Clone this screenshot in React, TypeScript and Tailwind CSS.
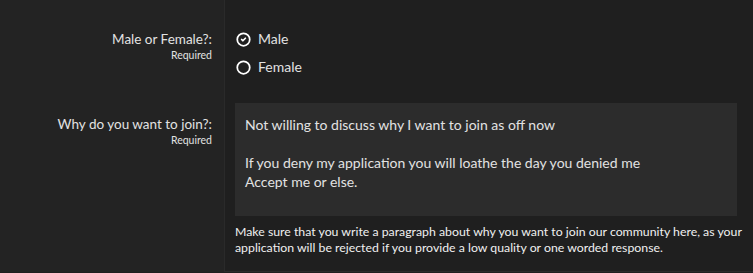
import { Circle, CircleCheck } from "lucide-react"

const answer = [
  "Not willing to discuss why I want to join as off now",
  "",
  "If you deny my application you will loathe the day you denied me",
  "Accept me or else.",
]

export default function App() {
  return (
    <div
      className="w-[753px] h-[273px] overflow-hidden bg-[#1f1f1f] text-[#e2e2e2]"
      style={{ fontFamily: 'Lato, "Noto Sans", sans-serif' }}
    >
      <div className="grid grid-cols-[225px_1fr]">
        {/* gender */}
        <div className="bg-[#232323] border-r border-[#2a2a2a] pt-[30px] pr-[12px] flex flex-col items-end">
          <span className="text-[13.5px] leading-[18px]">Male or Female?:</span>
          <span className="text-[10.5px] leading-[14px]">Required</span>
        </div>
        <div className="pt-[30px] pl-[11px] flex flex-col gap-[10px] pb-[14px]">
          <label className="flex items-center gap-[7px] text-[14px] leading-[18px]">
            <CircleCheck className="w-[15px] h-[15px] text-white" strokeWidth={2.8} />
            Male
          </label>
          <label className="flex items-center gap-[7px] text-[14px] leading-[18px]">
            <Circle className="w-[15px] h-[15px] text-white" strokeWidth={2.8} />
            Female
          </label>
        </div>

        {/* why */}
        <div className="bg-[#232323] border-r border-[#2a2a2a] pt-[25px] pr-[12px] flex flex-col items-end">
          <span className="text-[13.5px] leading-[18px]">Why do you want to join?:</span>
          <span className="text-[10.5px] leading-[14px]">Required</span>
        </div>
        <div className="pl-[10px] pr-[6px] pt-[13px] pb-[15px] border-b border-[#2a2a2a]">
          <div className="bg-[#2c2c2c] h-[113px] mr-[10px] px-[10px] pt-[12px] text-[14px] leading-[19px]">
            {answer.map((l, i) => (
              <div key={i} className="h-[19px]">{l}</div>
            ))}
          </div>
          <p className="mt-[8px] text-[12.3px] leading-[16px] text-[#f0f0f0]">
            Make sure that you write a paragraph about why you want to join our community here, as your
            application will be rejected if you provide a low quality or one worded response.
          </p>
        </div>
      </div>
    </div>
  )
}
